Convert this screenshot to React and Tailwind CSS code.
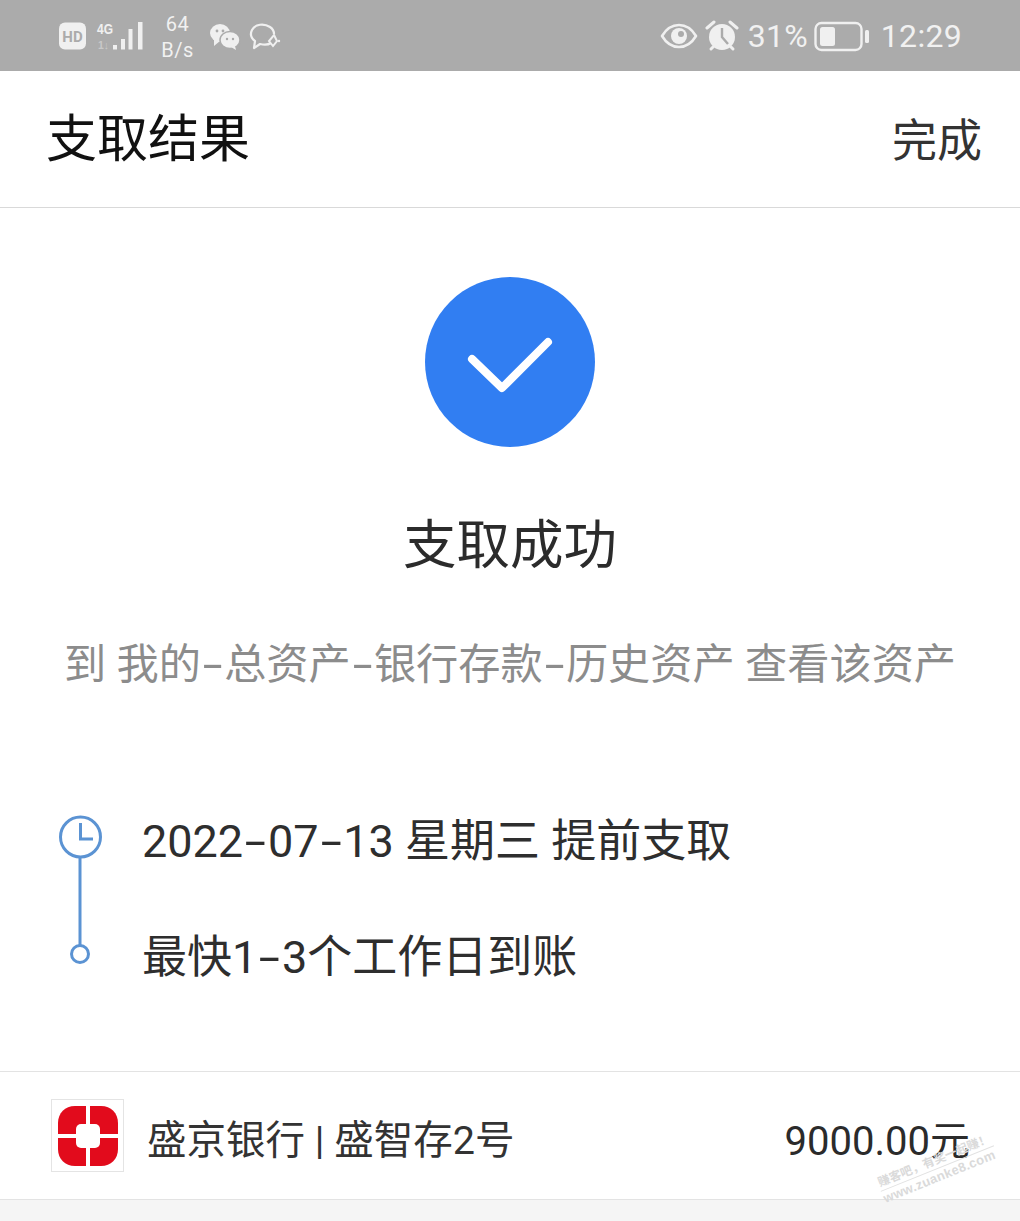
const cjk = { fontFamily: '"Roboto","Noto Sans CJK SC",sans-serif' };

function Dash() {
  return <span className="inline-block w-[0.55em] text-center scale-x-[1.7]">-</span>;
}

function StatusLeft() {
  return (
    <div className="flex items-center text-[#f1f1f1]">
      <svg width="30" height="30" viewBox="0 0 30 30" className="ml-[57px]">
        <rect x="2" y="1.5" width="27" height="27" rx="6" fill="#f0f0f0" />
        <text x="15.5" y="21" textAnchor="middle" fontSize="15" fontWeight="700" fill="#ababab" fontFamily="Roboto">HD</text>
      </svg>
      <svg width="48" height="36" viewBox="0 0 48 36" className="ml-[9px]">
        <text x="1" y="15.5" fontSize="15" fontWeight="700" fill="#f0f0f0" fontFamily="Liberation Sans" textLength="16" lengthAdjust="spacingAndGlyphs">4G</text>
        <text x="2" y="31" fontSize="11" fontWeight="700" fill="#c9c9c9" fontFamily="Liberation Sans" textLength="11" lengthAdjust="spacingAndGlyphs">1↓</text>
        <rect x="17" y="27" width="4" height="4.5" fill="#f0f0f0" />
        <rect x="25" y="21" width="4" height="10.5" fill="#f0f0f0" />
        <rect x="32.5" y="11" width="4" height="20.5" fill="#f0f0f0" />
        <rect x="42" y="4" width="4.5" height="27.5" fill="#f0f0f0" />
      </svg>
      <div className="ml-[17px] w-[33px] text-center text-[20px] leading-[26px] tracking-[0.5px] pt-[2px]" style={cjk}>
        <div>64</div>
        <div>B/s</div>
      </div>
      <svg width="32" height="30" viewBox="0 0 32 30" className="ml-[15px]">
        <ellipse cx="11" cy="12" rx="10" ry="9" fill="#f0f0f0" />
        <path d="M5 18 L5 25 L11 20 Z" fill="#f0f0f0" />
        <ellipse cx="21" cy="19" rx="10" ry="8.5" fill="#f0f0f0" stroke="#ababab" strokeWidth="1.5" />
        <path d="M26 25 L27 29 L22 26 Z" fill="#f0f0f0" />
        <circle cx="8" cy="10" r="1.4" fill="#ababab" />
        <circle cx="14" cy="10" r="1.4" fill="#ababab" />
        <circle cx="18" cy="18" r="1.2" fill="#ababab" />
        <circle cx="24" cy="18" r="1.2" fill="#ababab" />
      </svg>
      <svg width="32" height="30" viewBox="0 0 32 30" className="ml-[8px]">
        <path d="M22 22 C19 24 15 24 11 23 L5 27 L6 20 C2 17 1 13 3 9 C6 3 15 2 21 6 C24 8 25 11 25 13" fill="none" stroke="#f0f0f0" strokeWidth="2.2" strokeLinejoin="round" />
        <path d="M25 14 L28 20 L24 25 L20 20 Z" fill="none" stroke="#f0f0f0" strokeWidth="2" />
        <circle cx="30" cy="20" r="1.2" fill="#f0f0f0" />
      </svg>
    </div>
  );
}

function StatusRight() {
  return (
    <div className="flex items-center text-[#f1f1f1]">
      <svg width="38" height="26" viewBox="0 0 38 26">
        <path d="M2 13 C8 3 14 2 19 2 C24 2 30 3 36 13 C30 23 24 24 19 24 C14 24 8 23 2 13 Z" fill="none" stroke="#f0f0f0" strokeWidth="2.6" strokeLinejoin="round" />
        <circle cx="19" cy="13" r="8" fill="#f0f0f0" />
        <circle cx="21" cy="11" r="3" fill="#ababab" />
      </svg>
      <svg width="34" height="34" viewBox="0 0 34 34" className="ml-[7px]">
        <circle cx="17" cy="18" r="13" fill="#f0f0f0" />
        <path d="M17 9 V18 L23 25" fill="none" stroke="#ababab" strokeWidth="2.4" />
        <path d="M2 9 L9 3 M32 9 L25 3" stroke="#f0f0f0" strokeWidth="3" strokeLinecap="round" />
        <path d="M6 30 L8 28 M28 30 L26 28" stroke="#f0f0f0" strokeWidth="3" strokeLinecap="round" />
      </svg>
      <span className="ml-[9px] text-[32px] leading-none tracking-[0.2px]" style={{ fontFamily: 'Roboto,sans-serif' }}>31%</span>
      <svg width="56" height="32" viewBox="0 0 56 32" className="ml-[6px]">
        <rect x="1.5" y="3" width="46" height="27" rx="6" fill="none" stroke="#f0f0f0" strokeWidth="2.4" />
        <rect x="6" y="7" width="15" height="19" rx="2.5" fill="#f0f0f0" />
        <rect x="51" y="10" width="4" height="13" rx="1.5" fill="#f0f0f0" />
      </svg>
      <span className="ml-[11px] mr-[58px] text-[32px] leading-none tracking-[0.3px]" style={{ fontFamily: 'Roboto,sans-serif' }}>12:29</span>
    </div>
  );
}

function Logo() {
  return (
    <div className="w-[73px] h-[73px] shrink-0 border border-[#e4e4e4] flex items-center justify-center">
      <svg width="62" height="62" viewBox="0 0 62 62">
        <path d="M29 1 V29 H1 V18 C1 8 8 1 18 1 Z" fill="#e20b1c" />
        <path d="M33 1 V29 H61 V18 C61 8 54 1 44 1 Z" fill="#e20b1c" />
        <path d="M29 61 V33 H1 V44 C1 54 8 61 18 61 Z" fill="#e20b1c" />
        <path d="M33 61 V33 H61 V44 C61 54 54 61 44 61 Z" fill="#e20b1c" />
        <rect x="19" y="19" width="24" height="24" rx="5" fill="#fff" />
      </svg>
    </div>
  );
}

export default function App() {
  return (
    <div className="relative w-[1020px] h-[1221px] overflow-hidden bg-white" style={cjk}>
      <div className="h-[71px] bg-[#ababab] flex items-center justify-between">
        <StatusLeft />
        <StatusRight />
      </div>

      <header className="h-[137px] border-b border-[#d9d9d9] flex items-center justify-between pl-[46px] pr-[38px]">
        <h1 className="text-[51px] leading-none text-[#111] mt-[1px]">支取结果</h1>
        <span className="text-[45px] leading-none text-[#333] mt-[5px]">完成</span>
      </header>

      <main className="h-[863px] flex flex-col">
        <div className="pt-[69px] flex justify-center">
          <div className="w-[170px] h-[170px] rounded-full bg-[#317ef2] flex items-center justify-center">
            <svg width="100" height="80" viewBox="0 0 100 80">
              <path d="M12 37 L42 66 L88 20" fill="none" stroke="#fff" strokeWidth="8" strokeLinecap="round" strokeLinejoin="round" />
            </svg>
          </div>
        </div>

        <h2 className="mt-[69px] text-center text-[53.5px] leading-[60px] text-[#2b2b2b]">支取成功</h2>

        <p className="mt-[61px] text-center text-[42.2px] leading-[56px] text-[#8c8c8c] whitespace-nowrap">到 我的<Dash />总资产<Dash />银行存款<Dash />历史资产 查看该资产</p>

        <div className="mt-[119px] pl-[59px] flex">
          <svg width="44" height="152" viewBox="0 0 44 152" className="shrink-0 mt-[3px]">
            <circle cx="21.5" cy="22" r="20" fill="none" stroke="#5b93d3" strokeWidth="3" />
            <path d="M21.5 8 V24 H34" fill="none" stroke="#5b93d3" strokeWidth="3" />
            <path d="M21 42 V131" stroke="#5b93d3" strokeWidth="3" />
            <circle cx="21" cy="139" r="8.5" fill="none" stroke="#5b93d3" strokeWidth="3" />
          </svg>
          <div className="ml-[39px] flex flex-col gap-[56px] text-[45px] leading-[60px] text-[#2e2e2e] whitespace-nowrap">
            <div>2022<Dash />07<Dash />13 星期三 提前支取</div>
            <div>最快1<Dash />3个工作日到账</div>
          </div>
        </div>
      </main>

      <footer className="h-[129px] border-t border-b border-[#e3e3e3] flex items-center justify-between pl-[51px] pr-[50px]">
        <div className="flex items-center">
          <Logo />
          <span className="ml-[23px] mt-[10px] text-[39.5px] leading-none text-[#333] whitespace-nowrap">盛京银行 | 盛智存2号</span>
        </div>
        <span className="mt-[12px] text-[40px] leading-none text-[#2b2b2b]">9000.00元</span>
      </footer>
      <div className="h-[21px] bg-[#f5f5f5]" />

      <div className="absolute left-[875px] top-[1177px] -rotate-[22deg] origin-top-left text-[#dadada] whitespace-nowrap">
        <div className="text-[12px] leading-[15px] font-bold border-b border-[#e2e2e2] pl-[1px] pr-[1px]">赚客吧，有奖一起赚！</div>
        <div className="text-[13px] leading-[16px] font-bold tracking-[0.3px]" style={{ fontFamily: '"Liberation Sans",sans-serif' }}>www.zuanke8.com</div>
      </div>
    </div>
  );
}
